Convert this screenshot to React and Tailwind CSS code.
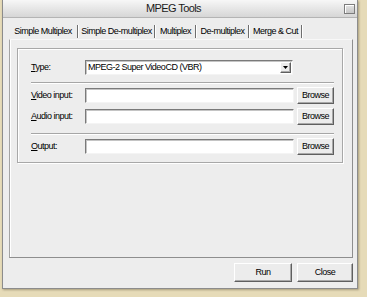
import React from 'react';

const FONT = "font-['Liberation_Sans',Arial,sans-serif]";
const TXT = 'text-[9px] tracking-[-0.5px] text-black leading-none whitespace-nowrap';

const sunken = 'bg-white border-t border-l border-t-[#7a7a7a] border-l-[#7a7a7a] border-b border-r border-b-[#f4f4f4] border-r-[#f4f4f4] shadow-[inset_1px_1px_0_#c4c4c4]';
const raised = 'bg-[#ececec] border-t border-l border-t-[#ffffff] border-l-[#ffffff] border-b border-r border-b-[#5f5f5f] border-r-[#5f5f5f] shadow-[inset_-1px_-1px_0_#a9a9a9]';

const Label = ({ k, rest }) => (
  <span className={`w-[54px] shrink-0 ${TXT}`}>
    <u className="underline-offset-1">{k}</u>{rest}
  </span>
);

const Browse = () => (
  <button className={`${raised} w-[37px] h-[17px] ml-[3px] ${TXT}`}>Browse</button>
);

const FileRow = ({ k, rest, mt }) => (
  <div className={`flex items-center h-[17px] ${mt}`}>
    <Label k={k} rest={rest} />
    <div className={`${sunken} w-[209px] h-[15px]`} />
    <Browse />
  </div>
);

const Sep = ({ mt }) => (
  <div className={`${mt} mr-[8px] h-[2px] border-t border-t-[#a6a6a6] border-b border-b-[#ffffff]`} />
);

const tabs = [
  { name: 'Simple Multiplex', w: 'w-[68px]' },
  { name: 'Simple De-multiplex', w: 'w-[75px]' },
  { name: 'Multiplex', w: 'w-[39px]' },
  { name: 'De-multiplex', w: 'w-[51px]' },
  { name: 'Merge & Cut', w: 'w-[51px]' },
];

export default function App() {
  return (
    <div className={`w-[367px] h-[297px] bg-[#e6dbb8] ${FONT}`}>
      <div className="ml-[2px] w-[356px] h-[289px] flex flex-col bg-[#ededed] border-l border-r border-b border-[#8c8c8c] shadow-[1px_1px_2px_rgba(90,80,50,0.45)]">
        {/* title bar */}
        <div className="h-[18px] flex items-center bg-gradient-to-b from-[#f7f7f7] to-[#d6d6d6] border-b border-b-[#b4b4b4]">
          <div className="flex-1 text-center text-[11px] tracking-[-0.6px] text-[#1a1a1a] leading-none whitespace-nowrap">MPEG Tools</div>
          <div className="w-[11px] h-[10px] mr-[2px] border border-[#7c7c7c] bg-gradient-to-b from-[#e4e4e4] to-[#c6c6c6] shadow-[inset_1px_1px_0_#ffffff]" />
        </div>

        {/* tabs */}
        <div className="flex items-center h-[15px] mt-[6px] ml-[6px]">
          {tabs.map(t => (
            <React.Fragment key={t.name}>
              <span className={`${t.w} text-center ${TXT}`}>{t.name}</span>
              <span className="w-[2px] h-[13px] border-l border-l-[#6e6e6e] border-r border-r-[#ffffff]" />
            </React.Fragment>
          ))}
        </div>

        {/* tab page */}
        <div className="ml-[6px] mr-[4px] h-[219px] border border-t-[#f8f8f8] border-l-[#a3a3a3] border-r-[#8e8e8e] border-b-[#8e8e8e] shadow-[inset_1px_0_0_#ffffff]">
          <div className="mt-[8px] ml-[7px] w-[326px] h-[115px] border border-[#a8a8a8] shadow-[inset_1px_1px_0_#ffffff,1px_1px_0_#ffffff] pl-[13px] pt-[11px]">
            <div className="flex items-center h-[15px]">
              <Label k="T" rest="ype:" />
              <div className={`${sunken} w-[208px] h-[15px] flex items-center`}>
                <span className={`flex-1 pl-[2px] ${TXT}`}>MPEG-2 Super VideoCD (VBR)</span>
                <div className={`${raised} w-[11px] h-[11px] mr-[1px] flex items-center justify-center`}>
                  <svg width="5" height="3" viewBox="0 0 5 3"><path d="M0 0h5L2.5 3z" fill="#000" /></svg>
                </div>
              </div>
            </div>
            <Sep mt="mt-[7px]" />
            <FileRow k="V" rest="ideo input:" mt="mt-[3px]" />
            <FileRow k="A" rest="udio input:" mt="mt-[4px]" />
            <Sep mt="mt-[8px]" />
            <FileRow k="O" rest="utput:" mt="mt-[3px]" />
          </div>
        </div>

        {/* buttons */}
        <div className="flex justify-end mt-[5px] mr-[4px] gap-[5px]">
          <button className={`${raised} w-[58px] h-[19px] ${TXT}`}>Run</button>
          <button className={`${raised} w-[56px] h-[19px] ${TXT}`}>Close</button>
        </div>
      </div>
    </div>
  );
}
